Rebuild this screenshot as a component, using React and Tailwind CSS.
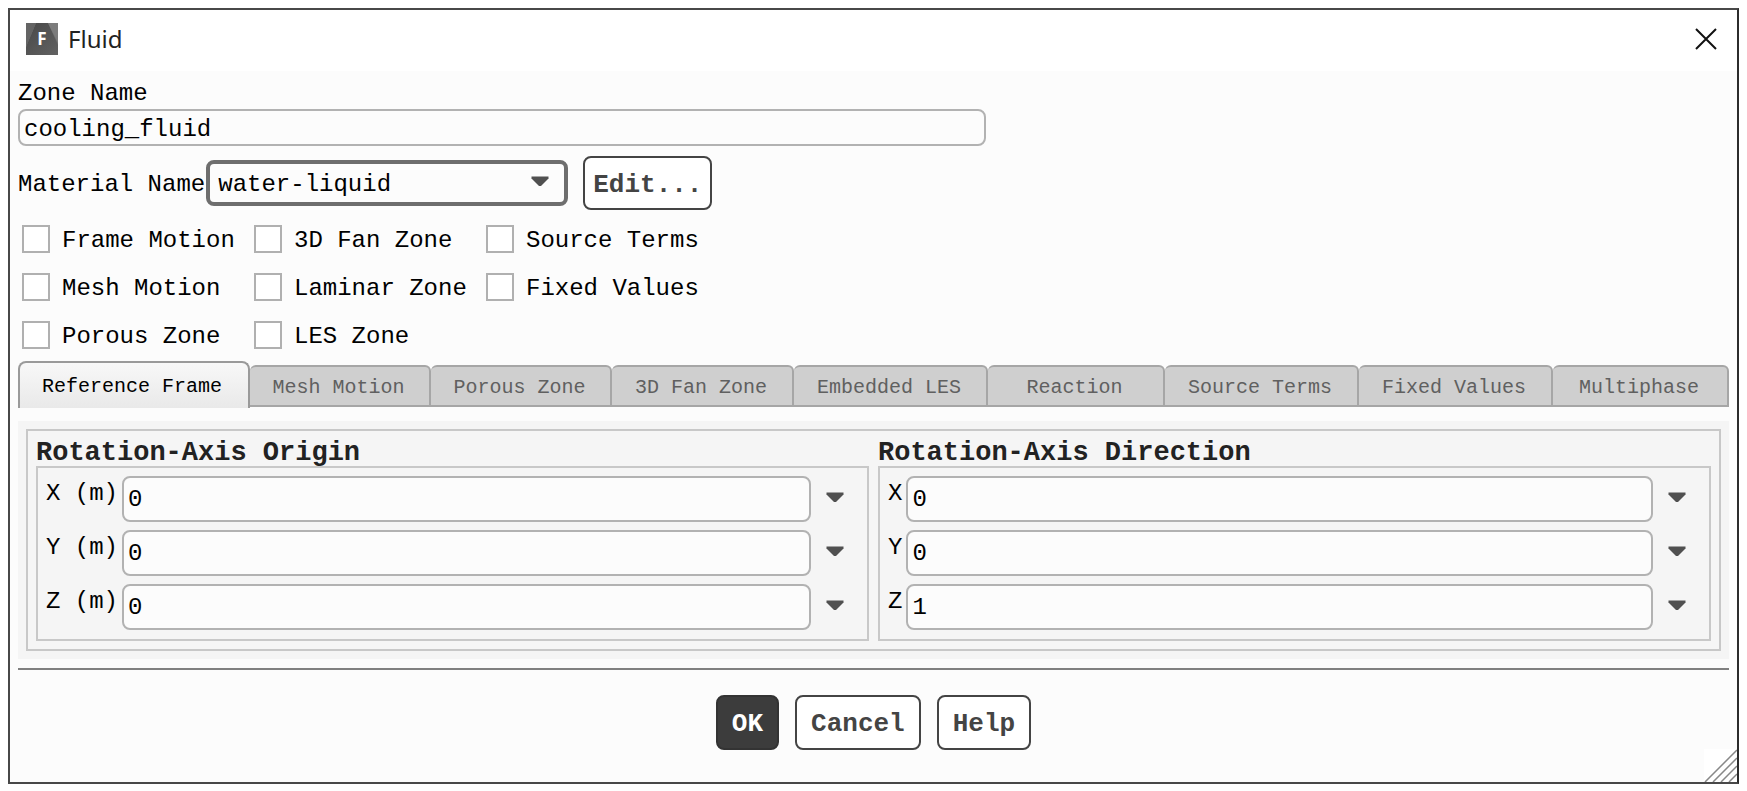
import React from "react";

const MONO = "font-['Liberation_Mono',monospace]";

const CHECKS = [
  "Frame Motion",
  "3D Fan Zone",
  "Source Terms",
  "Mesh Motion",
  "Laminar Zone",
  "Fixed Values",
  "Porous Zone",
  "LES Zone",
];

const TABS = [
  "Mesh Motion",
  "Porous Zone",
  "3D Fan Zone",
  "Embedded LES",
  "Reaction",
  "Source Terms",
  "Fixed Values",
  "Multiphase",
];

function Arrow({ className = "" }) {
  return (
    <svg width="18" height="11" viewBox="0 0 18 11" className={className} aria-hidden="true">
      <path d="M0.5 0.5H17.5V2.5L10 10H8L0.5 2.5Z" fill="#505050" />
    </svg>
  );
}

function AppIcon() {
  return (
    <svg width="32" height="32" viewBox="0 0 32 32" aria-hidden="true">
      <defs>
        <linearGradient id="facet" x1="0" y1="0" x2="1" y2="1">
          <stop offset="0" stopColor="#484848" />
          <stop offset="1" stopColor="#626262" />
        </linearGradient>
      </defs>
      <rect width="32" height="32" fill="#6e6e6e" />
      <path d="M10 0H22L32 22V32H0V24Z" fill="url(#facet)" />
      <path d="M22 0H32V20Z" fill="#7c7c7c" />
      <path d="M0 0H10L0 24Z" fill="#646464" />
      <text x="16" y="22" textAnchor="middle" fontFamily="Open Sans, sans-serif" fontWeight="700" fontSize="17" fill="#ffffff">
        F
      </text>
    </svg>
  );
}

function AxisGroup({ title, prefix, rows }) {
  return (
    <fieldset className="min-w-0 flex-1">
      <legend className="h-[35px] pt-[6px] text-[27px] leading-[32px] font-bold text-[#222]">{title}</legend>
      <div className="flex flex-col gap-2 border-2 border-[#c8c8c8] px-2 pt-2 pb-[9px]">
        {rows.map(([label, value]) => {
          const id = prefix + label[0];
          return (
            <div key={id} className="flex h-[46px] items-center">
              <label htmlFor={id} className="mr-1 self-start leading-[36px] whitespace-pre">
                {label}
              </label>
              <input
                id={id}
                defaultValue={value}
                className="h-full min-w-0 flex-1 rounded-lg border-2 border-[#b2b2b2] bg-[#fcfcfc] px-1 outline-none"
              />
              <button type="button" aria-label={`${label} options`} className="flex h-full w-12 items-center justify-center pb-1">
                <Arrow />
              </button>
            </div>
          );
        })}
      </div>
    </fieldset>
  );
}

export default function App() {
  return (
    <div className="min-h-screen bg-white p-2">
      <main className="relative border-2 border-[#484848] border-r-[#2c2c2c] bg-[#fcfcfc]">
        <header className="flex h-[61px] items-center bg-white pr-5 pb-1 pl-4 font-['Noto_Sans',sans-serif]">
          <AppIcon />
          <h1 className="ml-[10px] text-[24px] leading-[32px] text-[#222]">Fluid</h1>
          <button type="button" aria-label="Close" className="ml-auto">
            <svg width="22" height="22" viewBox="0 0 22 22" aria-hidden="true">
              <path d="M1 1L21 21M21 1L1 21" stroke="#111" strokeWidth="2" />
            </svg>
          </button>
        </header>

        <form className={`${MONO} px-2 text-[24px] leading-[32px] text-black`} onSubmit={(e) => e.preventDefault()}>
          <label htmlFor="zone" className="block h-[38px] pt-[7px]">
            Zone Name
          </label>
          <input
            id="zone"
            defaultValue="cooling_fluid"
            className="block h-[37px] w-[56.6%] rounded-lg border-2 border-[#b2b2b2] bg-[#fcfcfc] px-1 pt-1 outline-none"
          />

          <div className="mt-[10px] flex items-center">
            <label htmlFor="material" className="pt-[3px]">
              Material Name
            </label>
            <div className="relative ml-px">
              <select
                id="material"
                className="h-[46px] w-[362px] appearance-none rounded-lg border-4 border-[#6e6e6e] bg-[#fcfcfc] px-2 pt-[3px] outline-none"
              >
                <option>water-liquid</option>
              </select>
              <Arrow className="pointer-events-none absolute top-4 right-[19px]" />
            </div>
            <button
              type="button"
              className="ml-[15px] h-[54px] rounded-lg border-2 border-[#444] bg-white px-2 pt-[3px] text-[26px] font-bold text-[#444]"
            >
              Edit...
            </button>
          </div>

          <div className="mt-[5px] grid grid-cols-[232px_232px_232px] px-1 pb-[2px]">
            {CHECKS.map((name) => (
              <label key={name} className="flex h-12 items-center gap-3">
                <input
                  type="checkbox"
                  className="size-7 shrink-0 appearance-none border-2 border-[#b0b0b0] bg-white checked:bg-[#6e6e6e]"
                />
                <span className="pt-[3px] whitespace-nowrap">{name}</span>
              </label>
            ))}
          </div>

          <div
            role="tablist"
            className="grid grid-cols-[232fr_181fr_181fr_182fr_194fr_177fr_194fr_194fr_176fr] items-end text-[20px] leading-[24px]"
          >
            <button
              type="button"
              role="tab"
              aria-selected="true"
              className="h-[47px] rounded-t-lg border-2 border-b-0 border-[#9a9a9a] bg-linear-to-b from-[#f8f8f8] to-[#e9e9e9] pt-[2px] pr-1 whitespace-nowrap"
            >
              Reference Frame
            </button>
            {TABS.map((name) => (
              <button
                key={name}
                type="button"
                role="tab"
                aria-selected="false"
                className="mb-px h-[42px] rounded-t-md border-2 border-l-0 border-[#a6a6a6] bg-[#cfcfcf] pt-1 pr-[2px] whitespace-nowrap text-[#606060]"
              >
                {name}
              </button>
            ))}
          </div>

          <div role="tabpanel" className="mt-[13px] bg-[#f5f5f5] p-2">
            <div className="flex gap-[9px] border-2 border-[#c8c8c8] px-2 pb-2">
              <AxisGroup
                title="Rotation-Axis Origin"
                prefix="origin"
                rows={[
                  ["X (m)", "0"],
                  ["Y (m)", "0"],
                  ["Z (m)", "0"],
                ]}
              />
              <AxisGroup
                title="Rotation-Axis Direction"
                prefix="direction"
                rows={[
                  ["X", "0"],
                  ["Y", "0"],
                  ["Z", "1"],
                ]}
              />
            </div>
          </div>

          <hr className="mt-[9px] border-t-2 border-[#808080]" />

          <div className="flex justify-center gap-4 pt-[25px] pb-8 text-[26px] font-bold">
            <button type="submit" className="h-[55px] rounded-lg border-2 border-[#333] bg-[#3c3c3c] px-[14px] pt-[2px] text-white">
              OK
            </button>
            <button type="button" className="h-[55px] rounded-lg border-2 border-[#444] bg-white px-[14px] pt-[2px] text-[#444]">
              Cancel
            </button>
            <button type="button" className="h-[55px] rounded-lg border-2 border-[#444] bg-white px-[14px] pt-[2px] text-[#444]">
              Help
            </button>
          </div>
        </form>

        <svg width="33" height="33" viewBox="0 0 33 33" className="absolute right-0 bottom-0" aria-hidden="true">
          <rect width="33" height="33" fill="#fff" />
          <path d="M1 33L33 1M9 33L33 9M17 33L33 17M25 33L33 25" stroke="#888" strokeWidth="1.5" />
        </svg>
      </main>
    </div>
  );
}
